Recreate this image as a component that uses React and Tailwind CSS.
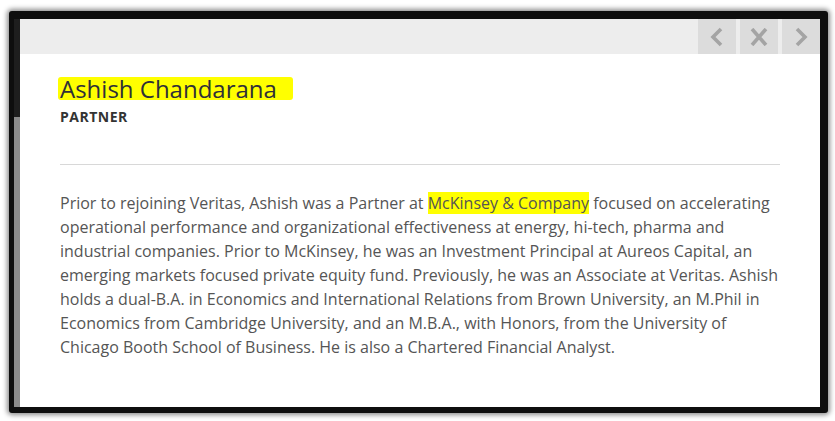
const NavButton = ({ children }) => (
  <div className="flex h-[35px] w-[38px] items-center justify-center bg-[#dcdcdc]">
    {children}
  </div>
);

const App = () => {
  return (
    <div className="h-[421px] w-[835px] overflow-hidden bg-white pt-[11px] pl-[9px]">
      {/* Dark frame */}
      <div className="flex h-[402px] w-[819px] flex-col rounded-[3px] bg-[#0e0e0e] pt-[8px] pr-[8px] pb-[6px] pl-[5px] shadow-[0_0_5px_2px_rgba(0,0,0,0.45)]">
        <div className="flex min-h-0 flex-1">
          {/* Dimmed page behind the modal */}
          <div className="flex w-[6px] flex-col">
            <div className="h-[98px] bg-[#1e1e1e]" />
            <div className="flex-1 bg-[#8b8b8b]" />
          </div>

          {/* Modal */}
          <div
            className="flex flex-1 flex-col bg-white"
            style={{ fontFamily: '"Open Sans", "Liberation Sans", sans-serif' }}
          >
            {/* Header */}
            <div className="flex h-[35px] justify-end gap-[4px] bg-[#ededed]">
              <NavButton>
                <svg width="16" height="20" viewBox="0 0 16 20">
                  <polyline
                    points="12,2 4,10 12,18"
                    fill="none"
                    stroke="#a4a4a4"
                    strokeWidth="3.6"
                  />
                </svg>
              </NavButton>
              <NavButton>
                <svg width="18" height="18" viewBox="0 0 18 18">
                  <path
                    d="M2 1 L16 17 M16 1 L2 17"
                    fill="none"
                    stroke="#a4a4a4"
                    strokeWidth="3.6"
                  />
                </svg>
              </NavButton>
              <NavButton>
                <svg width="16" height="20" viewBox="0 0 16 20">
                  <polyline
                    points="4,2 12,10 4,18"
                    fill="none"
                    stroke="#a4a4a4"
                    strokeWidth="3.6"
                  />
                </svg>
              </NavButton>
            </div>

            {/* Body */}
            <div className="px-[40px] pt-[23px]">
              <h2 className="flex text-[24px] font-normal text-[#2f2f38]">
                <span className="-ml-[2px] h-[23px] rounded-[3px] bg-[#ffff00] pr-[16px] pl-[2px] leading-[23px]">
                  Ashish Chandarana
                </span>
              </h2>

              <p className="mt-[7px] text-[14px] leading-[20px] font-bold tracking-[0.5px] text-[#333333]">
                PARTNER
              </p>

              <div className="mt-[37px] h-px bg-[#d8d8d8]" />

              <div className="mt-[26px] text-[16px] leading-[24px] text-[#555555]">
                <p className="whitespace-nowrap">
                  Prior to rejoining Veritas, Ashish was a Partner at{" "}
                  <span className="bg-[#ffff00]">McKinsey &amp; Company</span>{" "}
                  focused on accelerating
                </p>
                <p className="whitespace-nowrap">
                  operational performance and organizational effectiveness at energy, hi-tech, pharma and
                </p>
                <p className="whitespace-nowrap">
                  industrial companies. Prior to McKinsey, he was an Investment Principal at Aureos Capital, an
                </p>
                <p className="whitespace-nowrap">
                  emerging markets focused private equity fund. Previously, he was an Associate at Veritas. Ashish
                </p>
                <p className="whitespace-nowrap">
                  holds a dual-B.A. in Economics and International Relations from Brown University, an M.Phil in
                </p>
                <p className="whitespace-nowrap">
                  Economics from Cambridge University, and an M.B.A., with Honors, from the University of
                </p>
                <p className="whitespace-nowrap">
                  Chicago Booth School of Business. He is also a Chartered Financial Analyst.
                </p>
              </div>
            </div>
          </div>
        </div>
      </div>
    </div>
  );
};

export default App;
